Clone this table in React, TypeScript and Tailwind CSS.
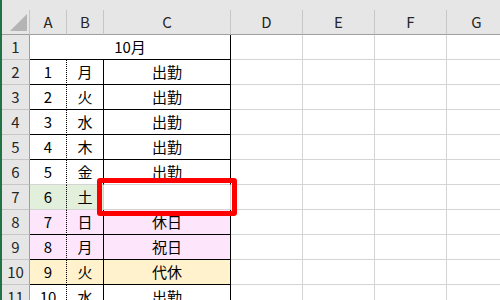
import React from 'react';

type Row = {
  n: number;
  day: string;
  status: string;
  fill?: string;
  bottom: string; // border colour class for row's bottom edge in A:C
  inner: string; // border colour for the B|C and C|D edges
};

const rows: Row[] = [
  { n: 1, day: '月', status: '出勤', bottom: 'border-b-black', inner: 'border-r-black' },
  { n: 2, day: '火', status: '出勤', bottom: 'border-b-black', inner: 'border-r-black' },
  { n: 3, day: '水', status: '出勤', bottom: 'border-b-black', inner: 'border-r-black' },
  { n: 4, day: '木', status: '出勤', bottom: 'border-b-black', inner: 'border-r-black' },
  { n: 5, day: '金', status: '出勤', bottom: 'border-b-[#d4d4d4]', inner: 'border-r-black' },
  { n: 6, day: '土', status: '', fill: 'bg-[#e2efda]', bottom: 'border-b-[#d4d4d4]', inner: 'border-r-[#d4d4d4]' },
  { n: 7, day: '日', status: '休日', fill: 'bg-[#fde6fb]', bottom: 'border-b-black', inner: 'border-r-black' },
  { n: 8, day: '月', status: '祝日', fill: 'bg-[#fde6fb]', bottom: 'border-b-black', inner: 'border-r-black' },
  { n: 9, day: '火', status: '代休', fill: 'bg-[#fff2cc]', bottom: 'border-b-black', inner: 'border-r-black' },
  { n: 10, day: '水', status: '出勤', bottom: 'border-b-black', inner: 'border-r-black' },
];

const cell = 'h-[25px] box-border flex items-center justify-center border-b border-r shrink-0';

function RowHead({ label }: { label: string | number }) {
  return (
    <div className={`${cell} w-[28px] bg-[#e6e6e6] border-b-[#c6c6c6] border-r-[#9e9e9e] text-[#262626]`}>
      {label}
    </div>
  );
}

function EmptyCols() {
  return (
    <>
      <div className={`${cell} w-[72px] border-b-[#d4d4d4] border-r-[#d4d4d4]`} />
      <div className={`${cell} w-[72px] border-b-[#d4d4d4] border-r-[#d4d4d4]`} />
      <div className={`${cell} w-[72px] border-b-[#d4d4d4] border-r-[#d4d4d4]`} />
      <div className={`${cell} w-[60px] border-b-[#d4d4d4] border-r-[#d4d4d4]`} />
    </>
  );
}

export default function App() {
  const cols = [
    { key: 'A', w: 'w-[37px]' },
    { key: 'B', w: 'w-[37px]' },
    { key: 'C', w: 'w-[127px]' },
    { key: 'D', w: 'w-[72px]' },
    { key: 'E', w: 'w-[72px]' },
    { key: 'F', w: 'w-[72px]' },
    { key: 'G', w: 'w-[60px]' },
  ];

  return (
    <div
      className="relative w-[500px] h-[300px] overflow-hidden bg-white flex items-start text-[15px] text-black"
      style={{ fontFamily: '"Noto Sans CJK JP", "Noto Sans", sans-serif' }}
    >
      <div className="w-[2px] h-full bg-[#217346] shrink-0" />
      <div className="flex flex-col shrink-0">
        <div className="h-[10px] bg-[#e6e6e6] shrink-0" />
        {/* column headers */}
        <div className="flex shrink-0">
          <div className="w-[28px] h-[25px] box-border bg-[#e6e6e6] border-b border-r border-b-[#9e9e9e] border-r-[#c6c6c6] flex items-end justify-end pr-[2px] pb-[3px] shrink-0">
            <svg width="17" height="17" viewBox="0 0 17 17">
              <polygon points="17,0 17,17 0,17" fill="#b4b4b4" />
            </svg>
          </div>
          {cols.map((c) => (
            <div
              key={c.key}
              className={`${cell} ${c.w} bg-[#e6e6e6] border-b-[#9e9e9e] border-r-[#c6c6c6] text-[#262626]`}
            >
              {c.key}
            </div>
          ))}
        </div>

        {/* row 1: merged title */}
        <div className="flex shrink-0">
          <RowHead label={1} />
          <div className={`${cell} w-[201px] border-b-black border-r-black`}>10月</div>
          <EmptyCols />
        </div>

        {rows.map((r, i) => (
          <div key={r.n} className="flex shrink-0">
            <RowHead label={i + 2} />
            <div className={`${cell} w-[37px] ${r.fill ?? ''} ${r.bottom} border-r-black [border-right-style:dotted]`}>
              {r.n}
            </div>
            <div className={`${cell} w-[37px] ${r.fill ?? ''} ${r.bottom} ${r.inner}`}>{r.day}</div>
            <div className={`${cell} w-[127px] ${r.n === 6 ? '' : r.fill ?? ''} ${r.bottom} ${r.inner}`}>
              {r.status}
            </div>
            <EmptyCols />
          </div>
        ))}
      </div>

      {/* highlight around C7 */}
      <div className="absolute left-[97px] top-[178px] w-[140px] h-[38px] border-[5px] rounded-[3px] border-[#ff0000]" />
    </div>
  );
}
